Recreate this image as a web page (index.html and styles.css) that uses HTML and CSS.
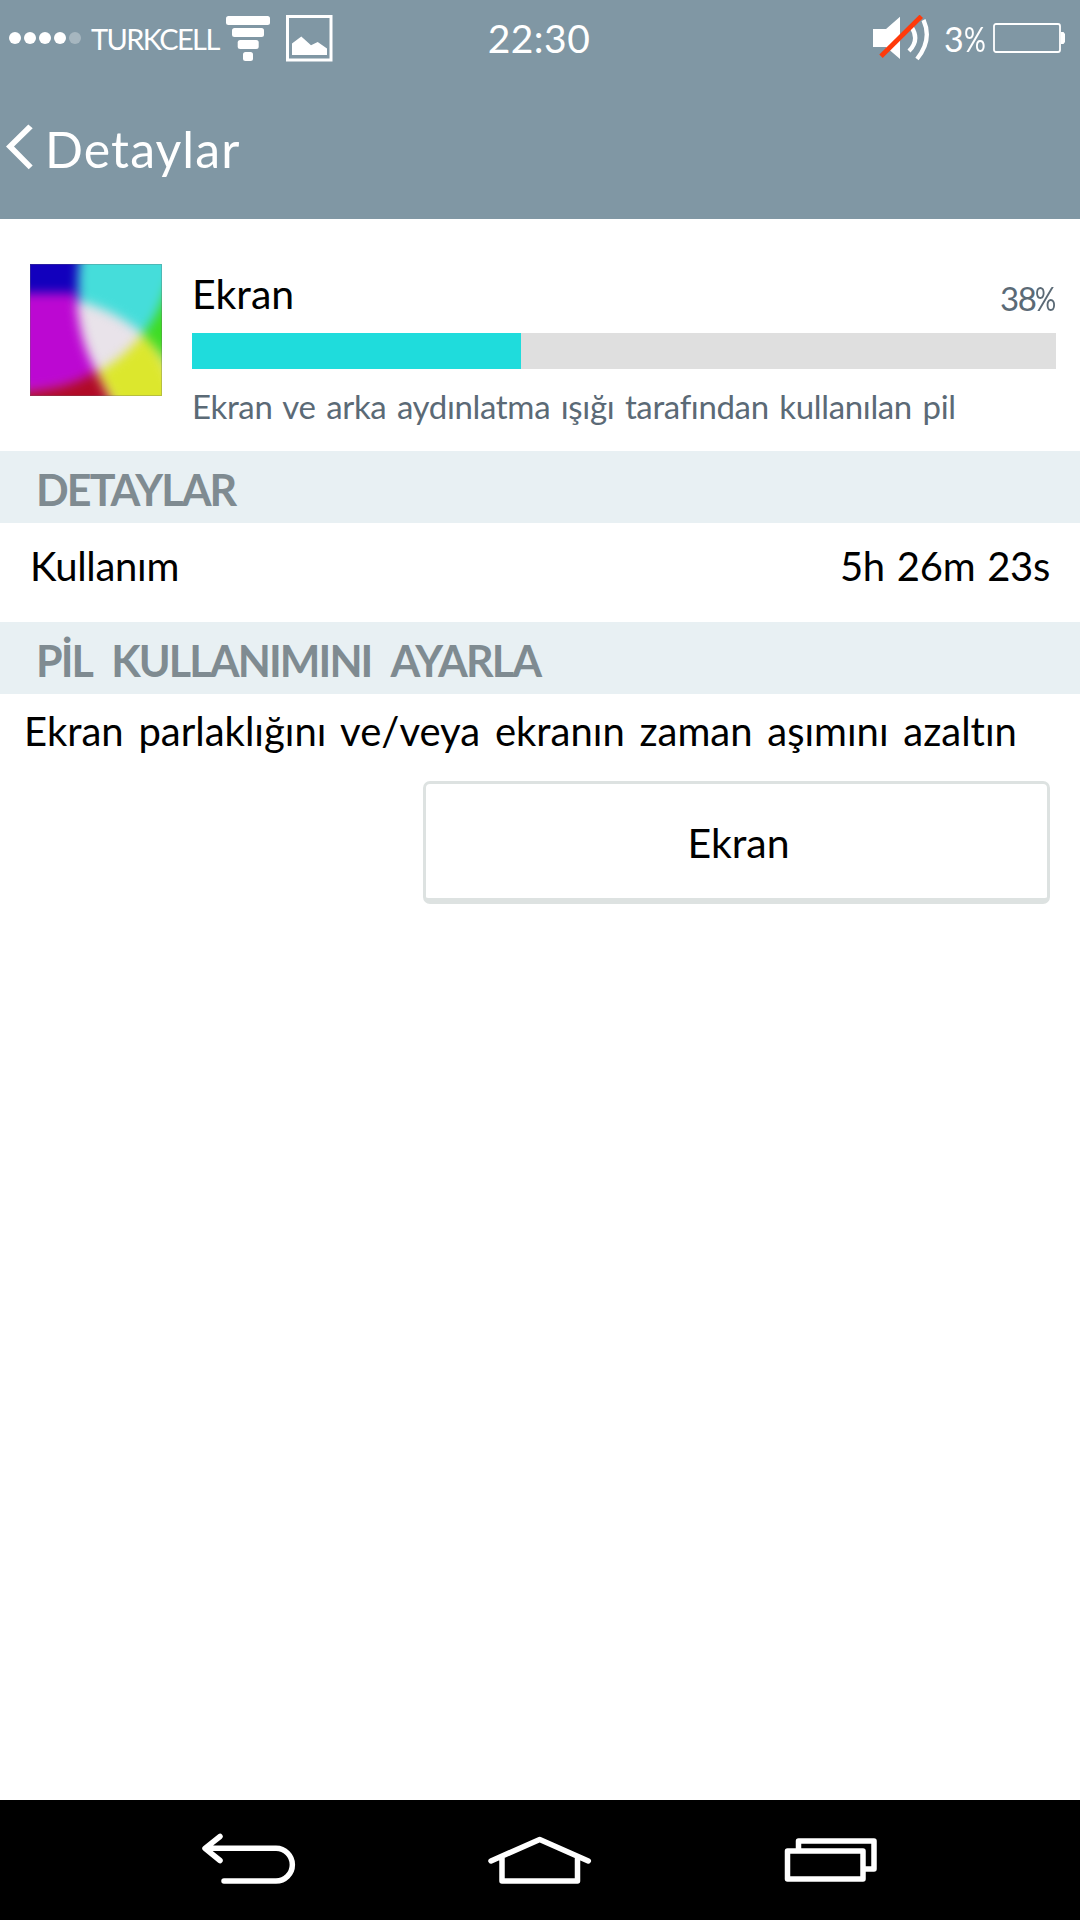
FILE: index.html
```html
<!DOCTYPE html>
<html lang="tr">
<head>
    <meta charset="UTF-8">
    <meta name="viewport" content="width=device-width, initial-scale=1.0">
    <title>Detaylar</title>
    <link rel="stylesheet" href="styles.css">
</head>
<body>
    <div class="screen">
        <header class="header">
            <div class="status-bar">
                <div class="status-left">
                    <svg class="icon-dots" width="72" height="12" viewBox="0 0 72 12" fill="#fff">
                        <circle cx="6" cy="6" r="6" />
                        <circle cx="21" cy="6" r="6" />
                        <circle cx="36" cy="6" r="6" />
                        <circle cx="51" cy="6" r="6" />
                        <circle cx="66" cy="6" r="6" opacity="0.3" />
                    </svg>
                    <span class="carrier">TURKCELL</span>
                    <svg class="icon-wifi" width="44" height="45" viewBox="0 0 44 45" fill="#fff">
                        <rect x="0" y="0" width="44" height="9" rx="2.5" />
                        <rect x="6" y="12" width="32" height="9" rx="2.5" />
                        <rect x="11.7" y="24" width="21" height="9" rx="2.5" />
                        <rect x="17" y="36" width="10" height="9" rx="2.5" />
                    </svg>
                    <svg class="icon-image" width="47" height="47" viewBox="0 0 47 47">
                        <rect x="1.5" y="1.5" width="43.5" height="43.5" fill="none" stroke="#fff" stroke-width="3" />
                        <path d="M6 28.5L15.3 21.5L25 30.3L31.7 27L41 33.5V40H6z" fill="#fff" />
                    </svg>
                </div>
                <div class="clock">22:30</div>
                <div class="status-right">
                    <svg class="icon-mute" width="57" height="46" viewBox="0 0 57 46" fill="none">
                        <path d="M0 14H13L27 1.7V44L13 32H0z" fill="#fff" />
                        <path d="M38.5 12Q47 25 36 36M50.5 5Q59.5 25 44 44" stroke="#fff" stroke-width="4.3" />
                        <path d="M8 41.3L48.3 1.3" stroke="#ff3a0a" stroke-width="4.8" />
                    </svg>
                    <span class="battery-level">3<span class="pct">%</span></span>
                    <svg class="icon-battery" width="72" height="30" viewBox="0 0 72 30">
                        <rect x="1" y="1" width="66" height="28" rx="2" fill="none" stroke="#fff" stroke-width="1.8" />
                        <path d="M68 9H70.5L72 11V19L70.5 21H68z" fill="#fff" />
                    </svg>
                </div>
            </div>
            <div class="title-bar">
                <svg class="icon-back" width="28" height="46" viewBox="0 0 28 46" fill="#fff">
                    <path d="M22.3 0.5L26.7 4.3L8 22.5L26.7 41.5L22.7 45.2L0 22.5z" />
                </svg>
                <h1 class="title">Detaylar</h1>
            </div>
        </header>

        <main class="content">
            <section class="usage">
                <svg class="usage-icon" width="132" height="132" viewBox="0 0 132 132">
                    <defs>
                        <filter id="soft" x="-20%" y="-20%" width="140%" height="140%" color-interpolation-filters="sRGB">
                            <feGaussianBlur stdDeviation="5.5" />
                        </filter>
                    </defs>
                    <rect width="132" height="132" fill="#e9e3ea" />
                    <g filter="url(#soft)">
                        <path d="M-20 -20H52Q48 10 49 38L30 32H-20z" fill="#1200bd" />
                        <path d="M-20 29H46Q48 75 66 107Q40 126 -20 128z" fill="#bc08d2" />
                        <path d="M-20 129Q40 126 66 107L88 152H-20z" fill="#b00a26" />
                        <path d="M52 -20H152V20Q130 55 112 69Q84 46 49 37Q46 8 52 -20z" fill="#45ddda" />
                        <path d="M152 10V120Q132 88 112 70Q128 54 138 20z" fill="#3edc24" />
                        <path d="M112 71Q132 88 142 120L152 152H92Q80 132 68 108Q94 94 112 71z" fill="#dce72d" />
                    </g>
                    <rect x="0.5" y="0.5" width="131" height="131" fill="none" stroke="#646464" stroke-opacity="0.3" />
                </svg>
                <div class="usage-info">
                    <div class="usage-head">
                        <span class="usage-name">Ekran</span>
                        <span class="usage-percent">38<span class="pct">%</span></span>
                    </div>
                    <div class="progress">
                        <div class="progress-fill" style="width: 38.1%"></div>
                    </div>
                    <p class="usage-text">Ekran ve arka aydınlatma ışığı tarafından kullanılan pil</p>
                </div>
            </section>

            <h2 class="section-title">DETAYLAR</h2>
            <div class="detail-row">
                <span class="detail-label">Kullanım</span>
                <span class="detail-value">5h 26m 23s</span>
            </div>

            <h2 class="section-title">PİL KULLANIMINI AYARLA</h2>
            <p class="hint">Ekran parlaklığını ve/veya ekranın zaman aşımını azaltın</p>
            <button class="button" type="button">Ekran</button>
        </main>

        <nav class="nav-bar">
            <svg width="96" height="120" viewBox="0 0 96 120">
                <path d="M20 36.5L5 48.3L20 60.5M6 48.3H76A16.3 16.3 0 0 1 76 81H24" />
            </svg>
            <svg width="106" height="120" viewBox="0 0 106 120">
                <path d="M4 61L52.7 39.5L101.3 61M15 57V81H90.5V57" />
            </svg>
            <svg width="94" height="120" viewBox="0 0 94 120">
                <path d="M3.500 51H79V79H3.500zM14.500 51V41H90V69H79" />
            </svg>
        </nav>
    </div>
</body>
</html>
```
FILE: styles.css
```css
:root {
    --header-bg: #8097a4;
    --section-bg: #e8f0f3;
    --section-text: #7f8b91;
    --text-secondary: #5b6a76;
    --accent: #1fdcdc;
    --track: #dfdfdf;
    --button-border: #dde2e1;
    --font-family-base: Lato, 'Open Sans', sans-serif;
}

* {
    box-sizing: border-box;
}

body {
    margin: 0;
    font-family: var(--font-family-base);
    font-variant-ligatures: none;
    background-color: #fff;
    color: #000;
}

h1,
h2,
p {
    margin: 0;
    font-weight: 400;
}

svg {
    display: block;
    flex: none;
}

.screen {
    display: flex;
    flex-direction: column;
    width: 1080px;
    height: 1920px;
    background-color: #fff;
    white-space: nowrap;
}

/* Header */
.header {
    height: 219px;
    background-color: var(--header-bg);
    color: #fff;
}

.status-bar {
    display: grid;
    grid-template-columns: 1fr auto 1fr;
    align-items: center;
    height: 76px;
    padding: 0 15px 0 9px;
}

.status-left,
.status-right {
    display: flex;
    align-items: center;
}

.status-right {
    justify-content: flex-end;
}

.carrier {
    width: 135px;
    margin-left: 10px;
    font-size: 29px;
    letter-spacing: -1.6px;
}

.icon-image {
    margin-left: 16px;
}

.clock {
    padding-left: 4px;
    font-size: 39px;
    letter-spacing: 0.5px;
}

.battery-level {
    width: 49px;
    margin-left: 14px;
    font-size: 34px;
}

.pct {
    display: inline-block;
    transform: scaleX(0.8);
    transform-origin: left center;
}

.title-bar {
    display: flex;
    align-items: center;
    height: 142px;
    padding-left: 6px;
}

.title {
    margin-left: 11px;
    padding-top: 3px;
    font-size: 50px;
    letter-spacing: 1.1px;
}

/* Battery usage */
.content {
    flex: 1;
}

.usage {
    display: flex;
    gap: 30px;
    height: 232px;
    padding: 45px 24px 0 30px;
}

.usage-info {
    flex: 1;
}

.usage-head {
    display: flex;
    justify-content: space-between;
    height: 69px;
    line-height: 60px;
}

.usage-name {
    font-size: 41px;
}

.usage-percent {
    width: 56px;
    padding-top: 4px;
    font-size: 33px;
    letter-spacing: -1.5px;
    color: var(--text-secondary);
}

.progress {
    height: 36px;
    background-color: var(--track);
}

.progress-fill {
    height: 100%;
    background-color: var(--accent);
}

.usage-text {
    padding-top: 17px;
    font-size: 33px;
    line-height: 40px;
    letter-spacing: -0.35px;
    word-spacing: 2.5px;
    color: var(--text-secondary);
}

/* Sections */
.section-title {
    height: 72px;
    padding-left: 36px;
    background-color: var(--section-bg);
    color: var(--section-text);
    font-size: 43px;
    font-weight: 700;
    line-height: 77px;
    letter-spacing: -1.9px;
    word-spacing: 12px;
}

.detail-row {
    display: flex;
    justify-content: space-between;
    height: 99px;
    padding: 0 30px;
    font-size: 40px;
    line-height: 86px;
    letter-spacing: -0.3px;
    word-spacing: 2px;
}

.hint {
    height: 87px;
    padding-left: 24px;
    font-size: 40px;
    line-height: 74px;
    word-spacing: 4.5px;
}

.button {
    display: block;
    width: 627px;
    height: 123px;
    margin-left: 423px;
    padding: 3px 0 0 4px;
    border: 3px solid var(--button-border);
    border-bottom-width: 6px;
    border-radius: 7px;
    background-color: #fff;
    color: #000;
    font-family: inherit;
    font-size: 41px;
}

/* Navigation */
.nav-bar {
    display: flex;
    justify-content: space-between;
    height: 120px;
    padding: 0 202px 0 200px;
    background-color: #000;
}

.nav-bar svg {
    fill: none;
    stroke: #fff;
    stroke-width: 5.5;
    stroke-linecap: round;
    stroke-linejoin: round;
}
```
